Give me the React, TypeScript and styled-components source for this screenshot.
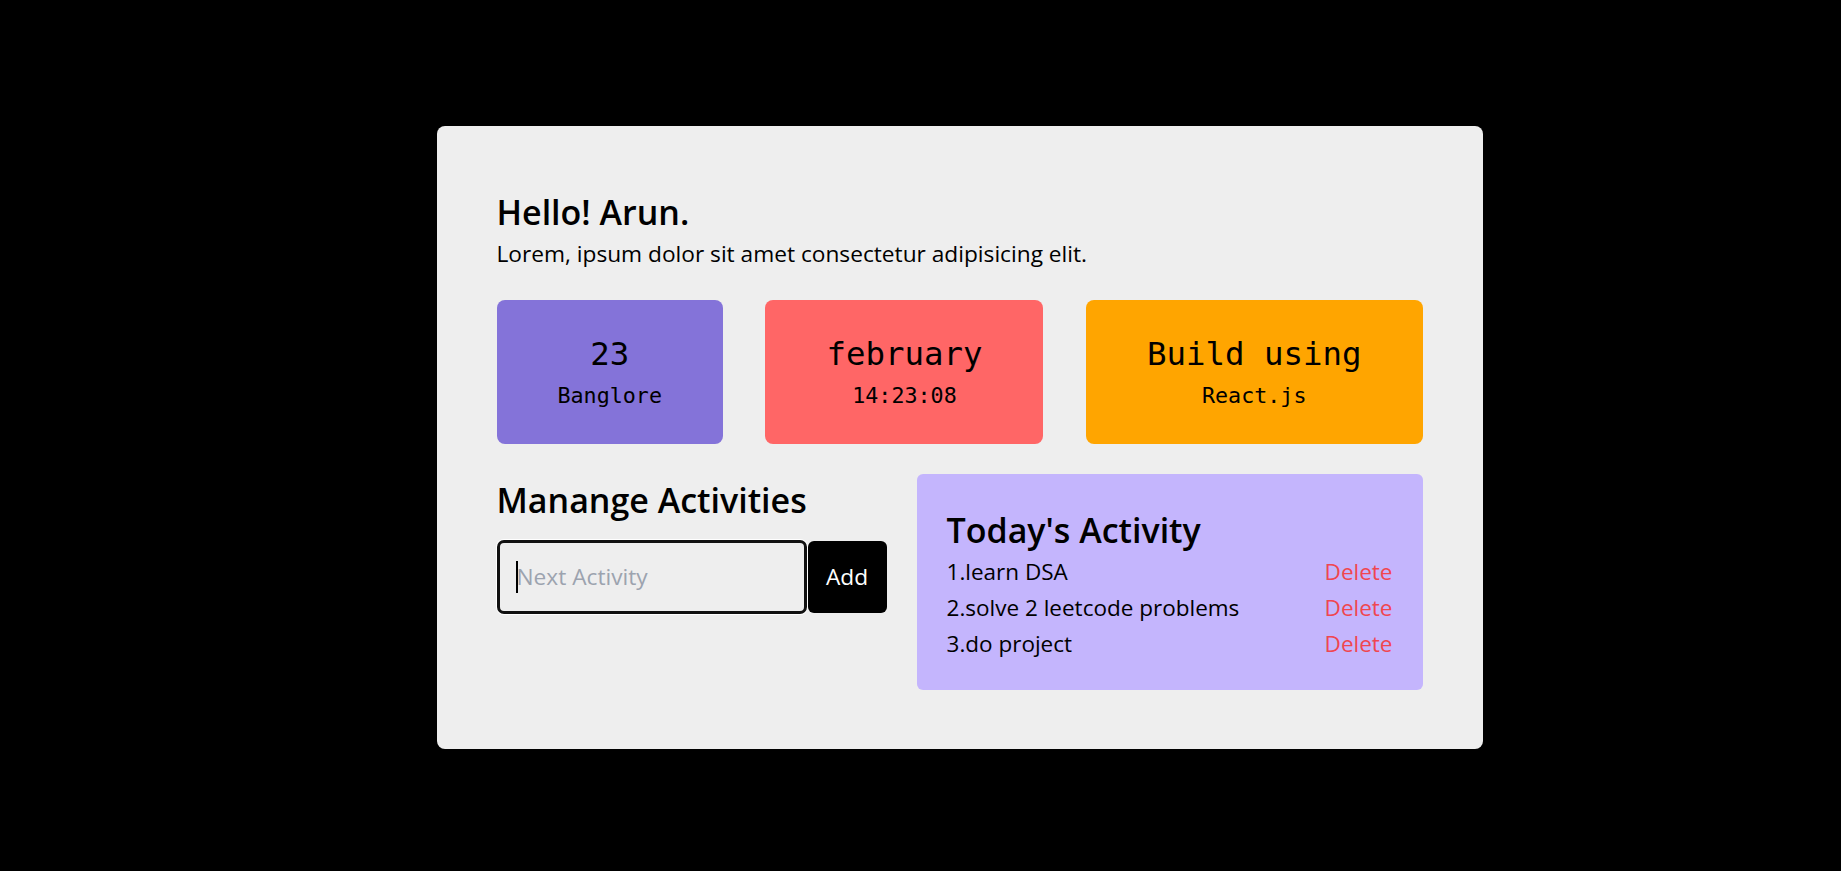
import React, { useState } from "react";
import styled, { createGlobalStyle } from "styled-components";

const GlobalStyle = createGlobalStyle`
  html, body {
    margin: 0;
    padding: 0;
    background: #000;
  }
  body {
    font-family: "Open Sans", "Noto Sans", sans-serif;
    color: #000;
  }
  * { box-sizing: border-box; }
`;

const Page = styled.div`
  min-height: 100vh;
  display: flex;
  align-items: center;
  justify-content: center;
  padding: 4px 0 0 78px;
`;

const Card = styled.main`
  width: 1046px;
  background: #eeeeee;
  border-radius: 8px;
  padding: 66px 60px 59px;
  display: flex;
  flex-direction: column;
`;

const Greeting = styled.h1`
  margin: 0;
  font-size: 34px;
  line-height: 40px;
  font-weight: 600;
`;

const Intro = styled.p`
  margin: 7px 0 0;
  font-size: 22.7px;
  line-height: 30px;
  font-weight: 400;
`;

const Tiles = styled.section`
  margin-top: 31px;
  display: flex;
  justify-content: space-between;
`;

const Tile = styled.div<{ $bg: string }>`
  height: 144px;
  padding: 0 61px;
  background: ${(p) => p.$bg};
  border-radius: 8px;
  display: flex;
  flex-direction: column;
  align-items: center;
  justify-content: center;
  gap: 8px;
  font-family: "DejaVu Sans Mono", "Liberation Mono", monospace;
  white-space: nowrap;
`;

const TileMain = styled.div`
  font-size: 32.4px;
  line-height: 40px;
`;

const TileSub = styled.div`
  font-size: 21.7px;
  line-height: 28px;
`;

const Lower = styled.section`
  margin-top: 30px;
  display: flex;
  justify-content: space-between;
  align-items: flex-start;
`;

const Manage = styled.div`
  display: flex;
  flex-direction: column;
`;

const SectionTitle = styled.h2`
  margin: 0;
  font-size: 34px;
  line-height: 40px;
  font-weight: 600;
`;

const ManageTitle = styled(SectionTitle)`
  margin-top: 6px;
`;

const InputRow = styled.form`
  margin-top: 20px;
  display: flex;
  align-items: center;
`;

const InputWrap = styled.div`
  position: relative;
  display: flex;
`;

const Caret = styled.span`
  position: absolute;
  left: 19px;
  top: 21px;
  width: 2px;
  height: 32px;
  background: #000;
  pointer-events: none;
`;

const ActivityInput = styled.input`
  width: 310px;
  height: 74px;
  border: 3px solid #111;
  border-radius: 7px;
  box-shadow: 0 0 0 1px #fff;
  outline: none;
  background: #eeeeee;
  padding: 0 0 0 17px;
  font-family: "Open Sans", "Noto Sans", sans-serif;
  font-size: 22.7px;
  color: #000;
  caret-color: transparent;

  &::placeholder {
    color: #9ca3af;
  }
`;

const AddButton = styled.button`
  width: 79px;
  height: 72px;
  margin-left: 1px;
  border: none;
  border-radius: 6px;
  background: #000;
  color: #fff;
  font-family: "Open Sans", "Noto Sans", sans-serif;
  font-size: 22.7px;
  cursor: pointer;
  padding: 0;
`;

const Panel = styled.div`
  width: 506px;
  background: #c4b5fd;
  border-radius: 6px;
  padding: 36px 30px 28px;
`;

const List = styled.ul`
  list-style: none;
  margin: 4.5px 0 0;
  padding: 0;
`;

const Item = styled.li`
  display: flex;
  justify-content: space-between;
  font-size: 22.5px;
  line-height: 36px;
`;

const DeleteLink = styled.span`
  color: #f04650;
  cursor: pointer;
`;

const initial = ["learn DSA", "solve 2 leetcode problems", "do project"];

export default function App() {
  const [items, setItems] = useState<string[]>(initial);
  const [value, setValue] = useState("");

  const add = (e: React.FormEvent) => {
    e.preventDefault();
    if (!value.trim()) return;
    setItems([...items, value.trim()]);
    setValue("");
  };

  return (
    <>
      <GlobalStyle />
      <Page>
        <Card>
          <Greeting>Hello! Arun.</Greeting>
          <Intro>Lorem, ipsum dolor sit amet consectetur adipisicing elit.</Intro>
          <Tiles>
            <Tile $bg="#8473d9">
              <TileMain>23</TileMain>
              <TileSub>Banglore</TileSub>
            </Tile>
            <Tile $bg="#ff6666">
              <TileMain>february</TileMain>
              <TileSub>14:23:08</TileSub>
            </Tile>
            <Tile $bg="#ffa500">
              <TileMain>Build using</TileMain>
              <TileSub>React.js</TileSub>
            </Tile>
          </Tiles>
          <Lower>
            <Manage>
              <ManageTitle>Manange Activities</ManageTitle>
              <InputRow onSubmit={add}>
                <InputWrap>
                  <ActivityInput
                    placeholder="Next Activity"
                    value={value}
                    onChange={(e) => setValue(e.target.value)}
                  />
                  {value === "" && <Caret />}
                </InputWrap>
                <AddButton type="submit">Add</AddButton>
              </InputRow>
            </Manage>
            <Panel>
              <SectionTitle>Today's Activity</SectionTitle>
              <List>
                {items.map((it, i) => (
                  <Item key={i}>
                    <span>
                      {i + 1}.{it}
                    </span>
                    <DeleteLink onClick={() => setItems(items.filter((_, j) => j !== i))}>
                      Delete
                    </DeleteLink>
                  </Item>
                ))}
              </List>
            </Panel>
          </Lower>
        </Card>
      </Page>
    </>
  );
}
